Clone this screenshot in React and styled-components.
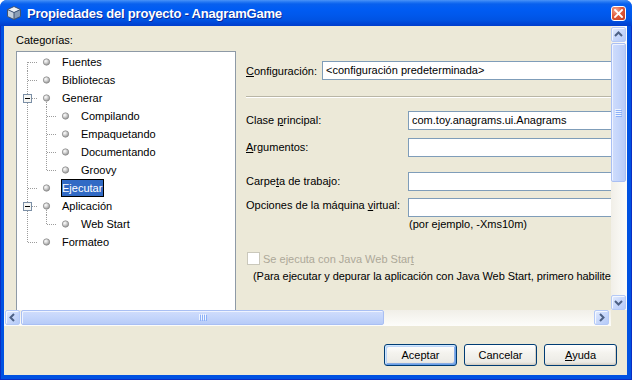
import React, { useId } from 'react';
import styled, { createGlobalStyle } from 'styled-components';

const GlobalStyle = createGlobalStyle`
  html, body { margin: 0; padding: 0; background: #ffffff; }
  body { width: 632px; height: 380px; overflow: hidden; }
  * { box-sizing: border-box; }
`;

const Window = styled.div`
  width: 632px;
  height: 380px;
  display: flex;
  flex-direction: column;
  border-radius: 7px 7px 0 0;
  overflow: hidden;
  font-family: "Liberation Sans", Arial, sans-serif;
  font-size: 11px;
  color: #000;
  background: #0050e0;
`;

const TitleBar = styled.div`
  flex: none;
  height: 26px;
  display: flex;
  align-items: center;
  gap: 5px;
  padding: 0 6px;
  background: linear-gradient(#4a94f8 0px, #2377f3 2px, #0860ee 4px, #005cf3 9px, #0058ec 15px, #0053e3 20px, #0048d8 23px, #003dcc 26px);
`;

const TitleText = styled.span`
  flex: 1;
  color: #fff;
  font-weight: bold;
  font-size: 13px;
  letter-spacing: -0.2px;
  text-shadow: 1px 1px 0 #0b2a9a;
  white-space: nowrap;
  padding-top: 1px;
`;

const CloseButton = styled.div`
  width: 15px;
  height: 15px;
  border: 1px solid #fff;
  border-radius: 3px;
  background: radial-gradient(circle at 30% 25%, #f2a891, #e15b3b 45%, #c23a1c 100%);
  display: flex;
  align-items: center;
  justify-content: center;
`;

const Frame = styled.div`
  flex: 1;
  min-height: 0;
  display: flex;
  padding: 0 5px 5px 4px;
  background: #0052e2;
  box-shadow: inset 1px 0 #0a2ec4, inset -1px 0 #0a2ec4, inset 0 -1px #0a2ec4;
`;

const Client = styled.div`
  flex: 1;
  display: flex;
  flex-direction: column;
  background: #ece9d8;
`;

const ScrollPane = styled.div`
  flex: none;
  height: 300px;
  display: grid;
  grid-template-columns: 1fr 16px;
  grid-template-rows: 1fr 16px;
`;

const Viewport = styled.div`
  overflow: hidden;
  display: flex;
  align-items: flex-start;
  padding: 8px 0 0 12px;
`;

const LeftColumn = styled.div`
  flex: none;
  width: 220px;
  display: flex;
  flex-direction: column;
  gap: 4px;
`;

const Caption = styled.div`
  line-height: 13px;
  white-space: nowrap;
`;

const TreeBox = styled.div`
  height: 270px;
  border: 1px solid #8e9aa6;
  background: #fff;
  padding-top: 1px;
  display: flex;
  flex-direction: column;
`;

const TreeRow = styled.div`
  height: 18px;
  display: flex;
  align-items: center;
  white-space: nowrap;
`;

const TreeLabel = styled.span`
  height: 18px;
  line-height: 16px;
  padding: 0 1px 0 0;
  border: 1px solid ${p => (p.$selected ? '#000' : 'transparent')};
  background: ${p => (p.$selected ? '#316ac5' : 'transparent')};
  color: ${p => (p.$selected ? '#fff' : '#000')};
`;

const RightPanel = styled.div`
  flex: none;
  width: 440px;
  padding: 27px 0 0 10px;
  display: flex;
  flex-direction: column;
`;

const ConfigRow = styled.div`
  display: flex;
  align-items: center;
  height: 19px;
`;

const ConfigLabel = styled.span`
  flex: none;
  width: 76px;
  white-space: nowrap;
`;

const Separator = styled.div`
  margin-top: 16px;
  height: 2px;
  border-top: 1px solid #b9b6a6;
  border-bottom: 1px solid #fff;
`;

const FieldRow = styled.div`
  display: flex;
  align-items: ${p => (p.$top ? 'flex-start' : 'center')};
  margin-top: ${p => p.$gap}px;
`;

const FieldLabel = styled.span`
  flex: none;
  width: 162px;
  white-space: nowrap;
  line-height: 13px;
  padding-top: ${p => (p.$top ? 1 : 0)}px;
`;

const TextField = styled.div`
  flex: none;
  width: ${p => p.$w}px;
  height: 19px;
  border: 1px solid #7f9db9;
  background: #fff;
  padding: 0 4px 0 3px;
  line-height: 17px;
  white-space: nowrap;
`;

const Hint = styled.div`
  margin: 1px 0 0 163px;
  line-height: 13px;
  white-space: nowrap;
`;

const CheckRow = styled.div`
  display: flex;
  align-items: center;
  gap: 3px;
  margin: 21px 0 0 1px;
  color: #aca899;
  white-space: nowrap;
`;

const CheckBox = styled.span`
  flex: none;
  width: 13px;
  height: 13px;
  border: 1px solid #cac8bb;
  background: #fff;
`;

const Note = styled.div`
  margin: 5px 0 0 7px;
  line-height: 13px;
  letter-spacing: -0.06px;
  white-space: nowrap;
`;

const VBar = styled.div`
  display: flex;
  flex-direction: column;
  padding: 1px 1px 0 0;
  background: linear-gradient(to right, #f1efe8, #fdfdfa);
`;

const HBar = styled.div`
  display: flex;
  padding: 0 2px 1px 1px;
  background: linear-gradient(#f1efe8, #fdfdfa);
`;

const Corner = styled.div`
  background: #ece9d8;
`;

const ArrowButton = styled.div`
  flex: none;
  width: 15px;
  height: 15px;
  border: 1px solid #b4c9f6;
  border-radius: 2px;
  background: linear-gradient(135deg, #e4ecfe, #c8d8fb 50%, #b5caf7);
  box-shadow: inset 1px 1px 0 #f4f8ff;
  display: flex;
  align-items: center;
  justify-content: center;
`;

const Thumb = styled.div`
  flex: none;
  ${p =>
    p.$vertical
      ? `width: 15px; height: ${p.$length}px; margin-top: 1px;
         background: linear-gradient(to right, #d0ddfc, #c4d5fb 50%, #b7cbf8);`
      : `height: 15px; width: ${p.$length}px; margin-left: 1px;
         background: linear-gradient(#d0ddfc, #c4d5fb 50%, #b7cbf8);`}
  border: 1px solid #a9bff3;
  border-radius: 2px;
  box-shadow: inset 1px 1px 0 #eef3ff;
  display: flex;
  align-items: center;
  justify-content: center;
`;

const Spacer = styled.div`
  flex: 1;
`;

const ButtonBar = styled.div`
  flex: 1;
  display: flex;
  justify-content: flex-end;
  align-items: flex-start;
  gap: 7px;
  padding: 18px 10px 0 0;
`;

const Button = styled.div`
  width: 73px;
  height: 22px;
  border: 1px solid #003c74;
  border-radius: 3px;
  background: linear-gradient(#ffffff, #f4f3ee 40%, #ecebe6 85%, #d6d0c5);
  display: flex;
  align-items: center;
  justify-content: center;
  ${p =>
    p.$default
      ? `box-shadow: inset 1px 1px 0 #cee7ff, inset -1px -1px 0 #69a0e8, inset 2px 2px 0 #bcd4f6, inset -2px -2px 0 #89ade4;`
      : `box-shadow: inset -1px -1px 0 #d6d0c5;`}
`;

const Glyph = styled.svg`
  display: block;
  flex: none;
`;

function CubeIcon() {
  return (
    <Glyph width="16" height="16" viewBox="0 0 16 16">
      <path d="M8 1.5 L14.5 4.5 L8 7.5 L1.5 4.5 Z" fill="#eef2f7" />
      <path d="M1.5 4.5 L8 7.5 L8 14.5 L1.5 11.5 Z" fill="#c3cfdc" />
      <path d="M14.5 4.5 L8 7.5 L8 14.5 L14.5 11.5 Z" fill="#8a9db4" />
      <path d="M8 1.5 L14.5 4.5 L14.5 11.5 L8 14.5 L1.5 11.5 L1.5 4.5 Z M1.5 4.5 L8 7.5 L14.5 4.5 M8 7.5 L8 14.5" fill="none" stroke="#3f5270" strokeWidth="1" strokeLinejoin="round" />
    </Glyph>
  );
}

function CloseGlyph() {
  return (
    <Glyph width="9" height="9" viewBox="0 0 9 9">
      <path d="M1 1 L8 8 M8 1 L1 8" stroke="#fff" strokeWidth="1.8" strokeLinecap="square" />
    </Glyph>
  );
}

const chevrons = {
  up: 'M1 6 L4.5 2.5 L8 6',
  down: 'M1 3 L4.5 6.5 L8 3',
  left: 'M6 1 L2.5 4.5 L6 8',
  right: 'M3 1 L6.5 4.5 L3 8',
};

function Arrow({ dir }) {
  return (
    <ArrowButton>
      <Glyph width="9" height="9" viewBox="0 0 9 9">
        <path d={chevrons[dir]} fill="none" stroke="#4d6185" strokeWidth="2" />
      </Glyph>
    </ArrowButton>
  );
}

function Grip({ vertical }) {
  const lines = [0, 2, 4, 6];
  return vertical ? (
    <Glyph width="8" height="8" viewBox="0 0 8 8">
      {lines.map(y => (
        <g key={y}>
          <rect x="0" y={y} width="6" height="1" fill="#eef4fe" />
          <rect x="1" y={y + 1} width="6" height="1" fill="#8cb0f8" />
        </g>
      ))}
    </Glyph>
  ) : (
    <Glyph width="8" height="8" viewBox="0 0 8 8">
      {lines.map(x => (
        <g key={x}>
          <rect x={x} y="0" width="1" height="6" fill="#eef4fe" />
          <rect x={x + 1} y="1" width="1" height="6" fill="#8cb0f8" />
        </g>
      ))}
    </Glyph>
  );
}

const tree = [
  { label: 'Fuentes', depth: 1, first: true },
  { label: 'Bibliotecas', depth: 1 },
  { label: 'Generar', depth: 1, expanded: true },
  { label: 'Compilando', depth: 2 },
  { label: 'Empaquetando', depth: 2 },
  { label: 'Documentando', depth: 2 },
  { label: 'Groovy', depth: 2, lastChild: true },
  { label: 'Ejecutar', depth: 1, selected: true },
  { label: 'Aplicación', depth: 1, expanded: true },
  { label: 'Web Start', depth: 2, lastChild: true },
  { label: 'Formateo', depth: 1, last: true },
];

const DOT = { stroke: '#9c9c9c', strokeWidth: 1, strokeDasharray: '1 1' };

function Bullet({ cx, gid }) {
  return <circle cx={cx} cy="9" r="3.2" fill={`url(#${gid})`} stroke="#8f8f8f" strokeWidth="0.8" />;
}

function TreeGuide({ node }) {
  const gid = useId().replace(/:/g, '_') + 'b';
  const w = node.depth === 1 ? 44 : 63;
  return (
    <Glyph width={w} height="18" viewBox={`0 0 ${w} 18`}>
      <defs>
        <radialGradient id={gid} cx="0.38" cy="0.35" r="0.7">
          <stop offset="0" stopColor="#ffffff" />
          <stop offset="0.45" stopColor="#d2d2d2" />
          <stop offset="1" stopColor="#8c8c8c" />
        </radialGradient>
      </defs>
      {node.depth === 1 ? (
        <>
          <line x1="10.5" y1={node.first ? 9 : 0} x2="10.5" y2={node.last ? 10 : 18} style={DOT} />
          <line x1="11" y1="9.5" x2="21" y2="9.5" style={DOT} />
          {node.expanded && (
            <>
              <line x1="29.5" y1="13" x2="29.5" y2="18" style={DOT} />
              <rect x="6.5" y="5.5" width="8" height="8" fill="#f6f6f3" stroke="#7b8fa6" />
              <line x1="8" y1="9.5" x2="13" y2="9.5" stroke="#000" />
            </>
          )}
          <Bullet cx={29.5} gid={gid} />
        </>
      ) : (
        <>
          <line x1="10.5" y1="0" x2="10.5" y2="18" style={DOT} />
          <line x1="29.5" y1="0" x2="29.5" y2={node.lastChild ? 10 : 18} style={DOT} />
          <line x1="30" y1="9.5" x2="40" y2="9.5" style={DOT} />
          <Bullet cx={48.5} gid={gid} />
        </>
      )}
    </Glyph>
  );
}

export default function App() {
  return (
    <>
      <GlobalStyle />
      <Window>
        <TitleBar>
          <CubeIcon />
          <TitleText>Propiedades del proyecto - AnagramGame</TitleText>
          <CloseButton>
            <CloseGlyph />
          </CloseButton>
        </TitleBar>
        <Frame>
          <Client>
            <ScrollPane>
              <Viewport>
                <LeftColumn>
                  <Caption>Categorías:</Caption>
                  <TreeBox>
                    {tree.map(node => (
                      <TreeRow key={node.label}>
                        <TreeGuide node={node} />
                        <TreeLabel $selected={node.selected}>{node.label}</TreeLabel>
                      </TreeRow>
                    ))}
                  </TreeBox>
                </LeftColumn>
                <RightPanel>
                  <ConfigRow>
                    <ConfigLabel><u>C</u>onfiguración:</ConfigLabel>
                    <TextField $w={340}>&lt;configuración predeterminada&gt;</TextField>
                  </ConfigRow>
                  <Separator />
                  <FieldRow $gap={13}>
                    <FieldLabel>Clase <u>p</u>rincipal:</FieldLabel>
                    <TextField $w={260}>com.toy.anagrams.ui.Anagrams</TextField>
                  </FieldRow>
                  <FieldRow $gap={8}>
                    <FieldLabel><u>A</u>rgumentos:</FieldLabel>
                    <TextField $w={260} />
                  </FieldRow>
                  <FieldRow $gap={15}>
                    <FieldLabel>Carpe<u>t</u>a de trabajo:</FieldLabel>
                    <TextField $w={260} />
                  </FieldRow>
                  <FieldRow $gap={7} $top>
                    <FieldLabel $top>Opciones de la máquina <u>v</u>irtual:</FieldLabel>
                    <TextField $w={260} />
                  </FieldRow>
                  <Hint>(por ejemplo, -Xms10m)</Hint>
                  <CheckRow>
                    <CheckBox />
                    <span>Se ejecuta con Java Web Star<u>t</u></span>
                  </CheckRow>
                  <Note>(Para ejecutar y depurar la aplicación con Java Web Start, primero habilite Java Web Start)</Note>
                </RightPanel>
              </Viewport>
              <VBar>
                <Arrow dir="up" />
                <Thumb $vertical $length={139}>
                  <Grip vertical />
                </Thumb>
                <Spacer />
                <Arrow dir="down" />
              </VBar>
              <HBar>
                <Arrow dir="left" />
                <Thumb $length={363}>
                  <Grip />
                </Thumb>
                <Spacer />
                <Arrow dir="right" />
              </HBar>
              <Corner />
            </ScrollPane>
            <ButtonBar>
              <Button $default>Aceptar</Button>
              <Button>Cancelar</Button>
              <Button><span><u>A</u>yuda</span></Button>
            </ButtonBar>
          </Client>
        </Frame>
      </Window>
    </>
  );
}
